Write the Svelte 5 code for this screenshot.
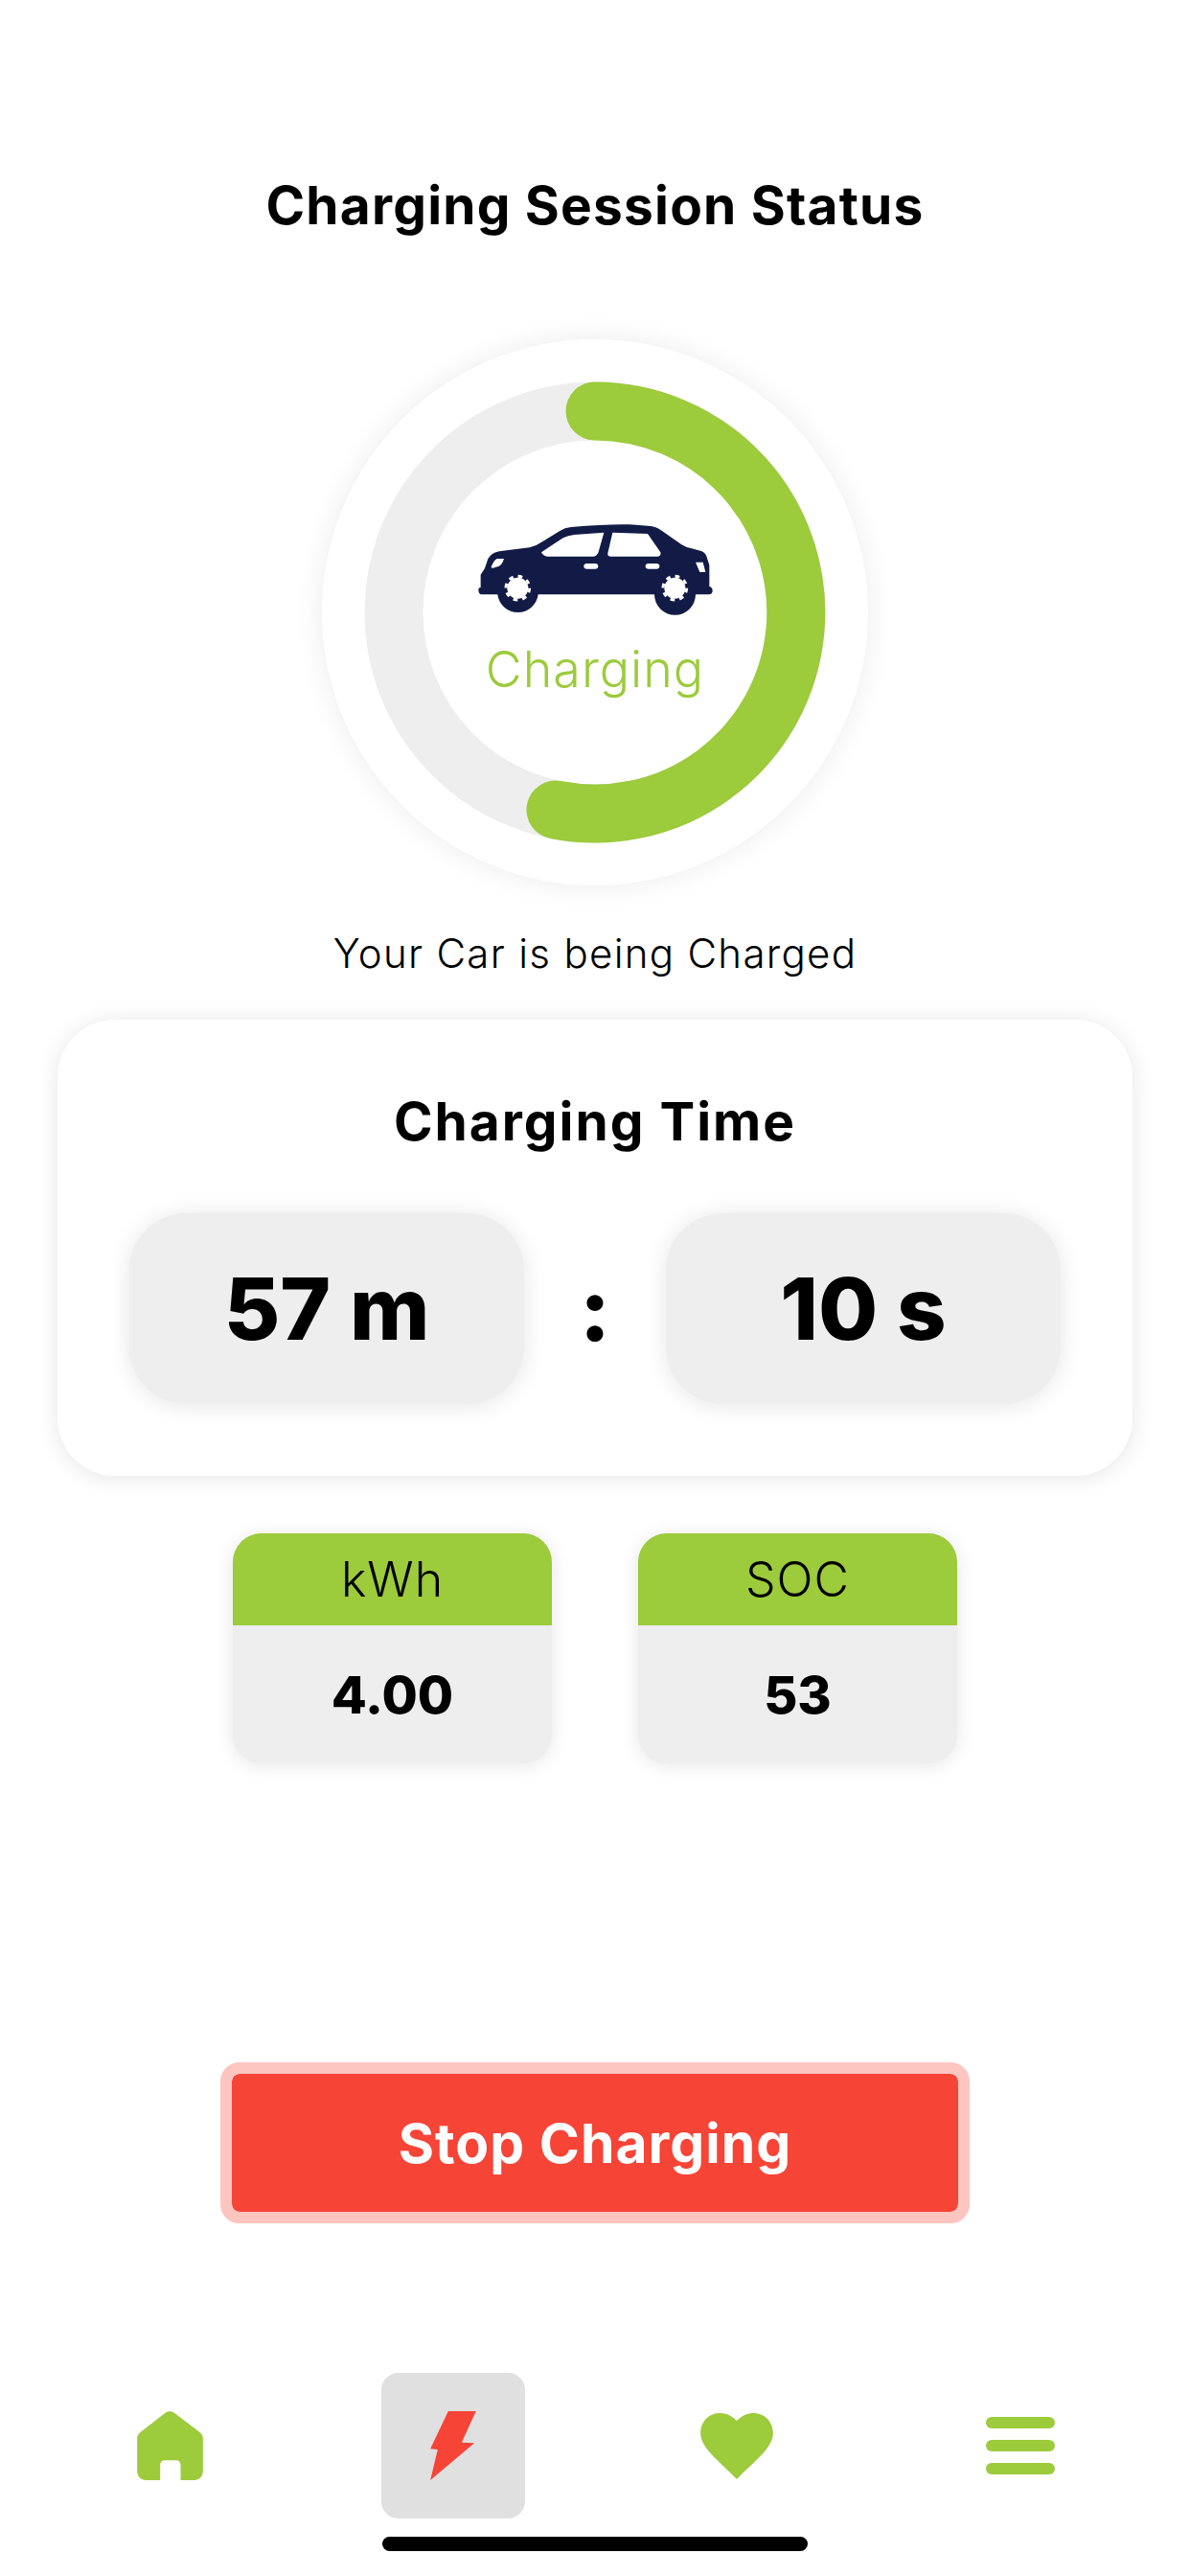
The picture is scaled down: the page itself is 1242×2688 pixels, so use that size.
<script>
	const stats = [
		{ label: 'kWh', value: '4.00' },
		{ label: 'SOC', value: '53' }
	];
</script>

<div class="screen">
	<h1 class="title">Charging Session Status</h1>

	<!-- Gauge -->
	<div class="gauge">
		<svg class="ring" viewBox="0 0 570 570" width="570" height="570">
			<circle cx="285" cy="285" r="210" fill="none" stroke="#eeeeee" stroke-width="61" />
			<path d="M285 75 A210 210 0 1 1 244 491" fill="none" stroke="#9ccb3b" stroke-width="61" stroke-linecap="round" />
		</svg>
		<div class="gauge-center">
			<svg class="car" viewBox="0 0 900 390" width="300" height="130">
				<path fill="#111b45" fill-rule="evenodd" d="M85 262 Q85 255 92 255 V215 L105 195 L115 165 Q127 146 150 142 L245 130 Q265 126 280 115 L340 78 Q355 68 375 66 Q490 56 560 58 L625 63 Q645 66 660 78 L720 120 Q735 130 750 132 L785 142 Q797 148 800 160 L808 185 V252 Q818 254 818 265 Q818 277 806 277 H765 A64 64 0 0 1 636 277 H272 A64 64 0 0 1 145 277 H95 Q85 277 85 262 Z
				M282 145 Q286 155 300 158 H445 Q458 157 462 140 L478 83 L385 90 Q365 92 350 100 Z
				M505 83 L490 148 Q488 158 500 158 H645 Q658 157 655 145 L615 87 Z
				M415 188 Q415 180 425 180 H450 Q460 180 460 188 Q460 197 450 197 H425 Q415 197 415 188 Z
				M608 188 Q608 180 618 180 H642 Q652 180 652 188 Q652 197 642 197 H618 Q608 197 608 188 Z
				M125 190 Q135 168 143 165 L165 165 Q160 182 150 188 L128 195 Z
				M765 176 H788 L796 207 H778 Z" />
				<circle cx="208" cy="257" r="33" fill="#fff" />
				<circle cx="208" cy="257" r="37" fill="none" stroke="#fff" stroke-width="9" stroke-dasharray="14 15" />
				<circle cx="700" cy="257" r="33" fill="#fff" />
				<circle cx="700" cy="257" r="37" fill="none" stroke="#fff" stroke-width="9" stroke-dasharray="14 15" />
			</svg>
			<span class="gauge-label">Charging</span>
		</div>
	</div>

	<p class="status">Your Car is being Charged</p>

	<!-- Time card -->
	<section class="time-card">
		<h2 class="time-title">Charging Time</h2>
		<div class="time-row">
			<div class="time-box">57 m</div>
			<span class="time-sep">:</span>
			<div class="time-box">10 s</div>
		</div>
	</section>

	<div class="stats">
		{#each stats as stat}
			<div class="stat">
				<div class="stat-label">{stat.label}</div>
				<div class="stat-value">{stat.value}</div>
			</div>
		{/each}
	</div>

	<button class="stop">Stop Charging</button>

	<!-- Bottom nav -->
	<nav class="nav">
		<div class="nav-item">
			<svg viewBox="0 0 206 216" width="69" height="72">
				<path fill="#9ccb3b" d="M90 4 Q102 -3 114 4 L196 66 Q206 74 206 84 V185 Q206 216 172 216 H136 V170 Q136 154 120 154 H88 Q72 154 72 170 V216 H34 Q0 216 0 185 V84 Q0 74 10 66 Z" />
			</svg>
		</div>
		<div class="nav-item active">
			<svg viewBox="0 0 143 216" width="48" height="72">
				<path fill="#f64437" d="M56 0 H143 L98 98 L138 100 L0 216 L23 120 L0 118 Z" />
			</svg>
		</div>
		<div class="nav-item">
			<svg viewBox="0 0 226 206" width="76" height="69">
				<path fill="#9ccb3b" d="M113 24 C95 6 78 0 60 0 C25 0 0 28 0 62 C0 110 60 150 113 206 C166 150 226 110 226 62 C226 28 200 0 165 0 C148 0 131 6 113 24 Z" />
			</svg>
		</div>
		<div class="nav-item">
			<div class="menu">
				<span></span>
				<span></span>
				<span></span>
			</div>
		</div>
	</nav>

	<div class="home-bar"></div>
</div>

<style>
	:global(body) {
		background: #fff;
	}

	.screen {
		width: 1242px;
		height: 2688px;
		padding-top: 184px;
		box-sizing: border-box;
		display: flex;
		flex-direction: column;
		align-items: center;
		background: #fff;
		color: #000;
		font-family: Inter, 'Open Sans', sans-serif;
		overflow: hidden;
	}

	.title {
		margin: 0;
		font-size: 55px;
		line-height: 60px;
		font-weight: 700;
		letter-spacing: 1.2px;
	}

	/* Gauge */
	.gauge {
		width: 570px;
		height: 570px;
		margin-top: 110px;
		border-radius: 50%;
		background: #fff;
		box-shadow: 0 0 30px rgba(0, 0, 0, 0.08);
		position: relative;
		flex-shrink: 0;
	}

	.ring {
		display: block;
	}

	.gauge-center {
		position: absolute;
		inset: 0;
		display: flex;
		flex-direction: column;
		align-items: center;
		padding-top: 174px;
		box-sizing: border-box;
	}

	.car {
		display: block;
		flex-shrink: 0;
	}

	.gauge-label {
		margin-top: 11px;
		font-size: 52px;
		line-height: 60px;
		font-weight: 300;
		letter-spacing: 1px;
		color: #9ccb3b;
	}

	.status {
		margin: 46px 0 0;
		font-size: 42px;
		line-height: 50px;
		font-weight: 300;
		letter-spacing: 1.3px;
	}

	/* Time card */
	.time-card {
		width: 1122px;
		height: 476px;
		margin-top: 44px;
		padding: 76px 75px 0;
		box-sizing: border-box;
		border-radius: 60px;
		background: #fff;
		box-shadow: 0 2px 24px rgba(0, 0, 0, 0.1);
		flex-shrink: 0;
	}

	.time-title {
		margin: 0;
		text-align: center;
		font-size: 55px;
		line-height: 60px;
		font-weight: 700;
		letter-spacing: 2px;
	}

	.time-row {
		margin-top: 66px;
		display: flex;
		justify-content: space-between;
		align-items: center;
	}

	.time-box {
		width: 412px;
		height: 199px;
		display: flex;
		align-items: center;
		justify-content: center;
		border-radius: 60px;
		background: #eeeeee;
		box-shadow: 0 2px 24px rgba(0, 0, 0, 0.1);
		font-size: 90px;
		font-weight: 800;
	}

	.time-sep {
		font-size: 92px;
		font-weight: 800;
	}

	/* Stats */
	.stats {
		margin-top: 60px;
		display: flex;
		gap: 90px;
	}

	.stat {
		width: 333px;
		height: 240px;
		border-radius: 30px;
		overflow: hidden;
		background: #eeeeee;
		box-shadow: 0 2px 20px rgba(0, 0, 0, 0.1);
	}

	.stat-label {
		height: 96px;
		display: flex;
		align-items: center;
		justify-content: center;
		background: #9ccb3b;
		font-size: 50px;
		font-weight: 300;
		letter-spacing: 1px;
	}

	.stat-value {
		height: 144px;
		display: flex;
		align-items: center;
		justify-content: center;
		font-size: 54px;
		font-weight: 800;
	}

	.stop {
		width: 782px;
		height: 168px;
		margin-top: 312px;
		padding: 0;
		box-sizing: border-box;
		border: 12px solid #fdc5c0;
		border-radius: 20px;
		background: #f64437 padding-box;
		color: #fff;
		font-family: inherit;
		font-size: 57px;
		font-weight: 700;
		letter-spacing: 1px;
		flex-shrink: 0;
	}

	/* Nav */
	.nav {
		width: 1184px;
		height: 152px;
		margin-top: 156px;
		display: grid;
		grid-template-columns: repeat(4, 296px);
		flex-shrink: 0;
	}

	.nav-item {
		width: 150px;
		height: 152px;
		justify-self: center;
		display: flex;
		align-items: center;
		justify-content: center;
		border-radius: 18px;
	}

	.nav-item.active {
		background: #e0e0e0;
	}

	.menu {
		display: flex;
		flex-direction: column;
		gap: 12px;
	}

	.menu span {
		display: block;
		width: 72px;
		height: 12px;
		border-radius: 6px;
		background: #9ccb3b;
	}

	.home-bar {
		width: 444px;
		height: 15px;
		margin-top: 19px;
		border-radius: 8px;
		background: #000;
		flex-shrink: 0;
	}
</style>
